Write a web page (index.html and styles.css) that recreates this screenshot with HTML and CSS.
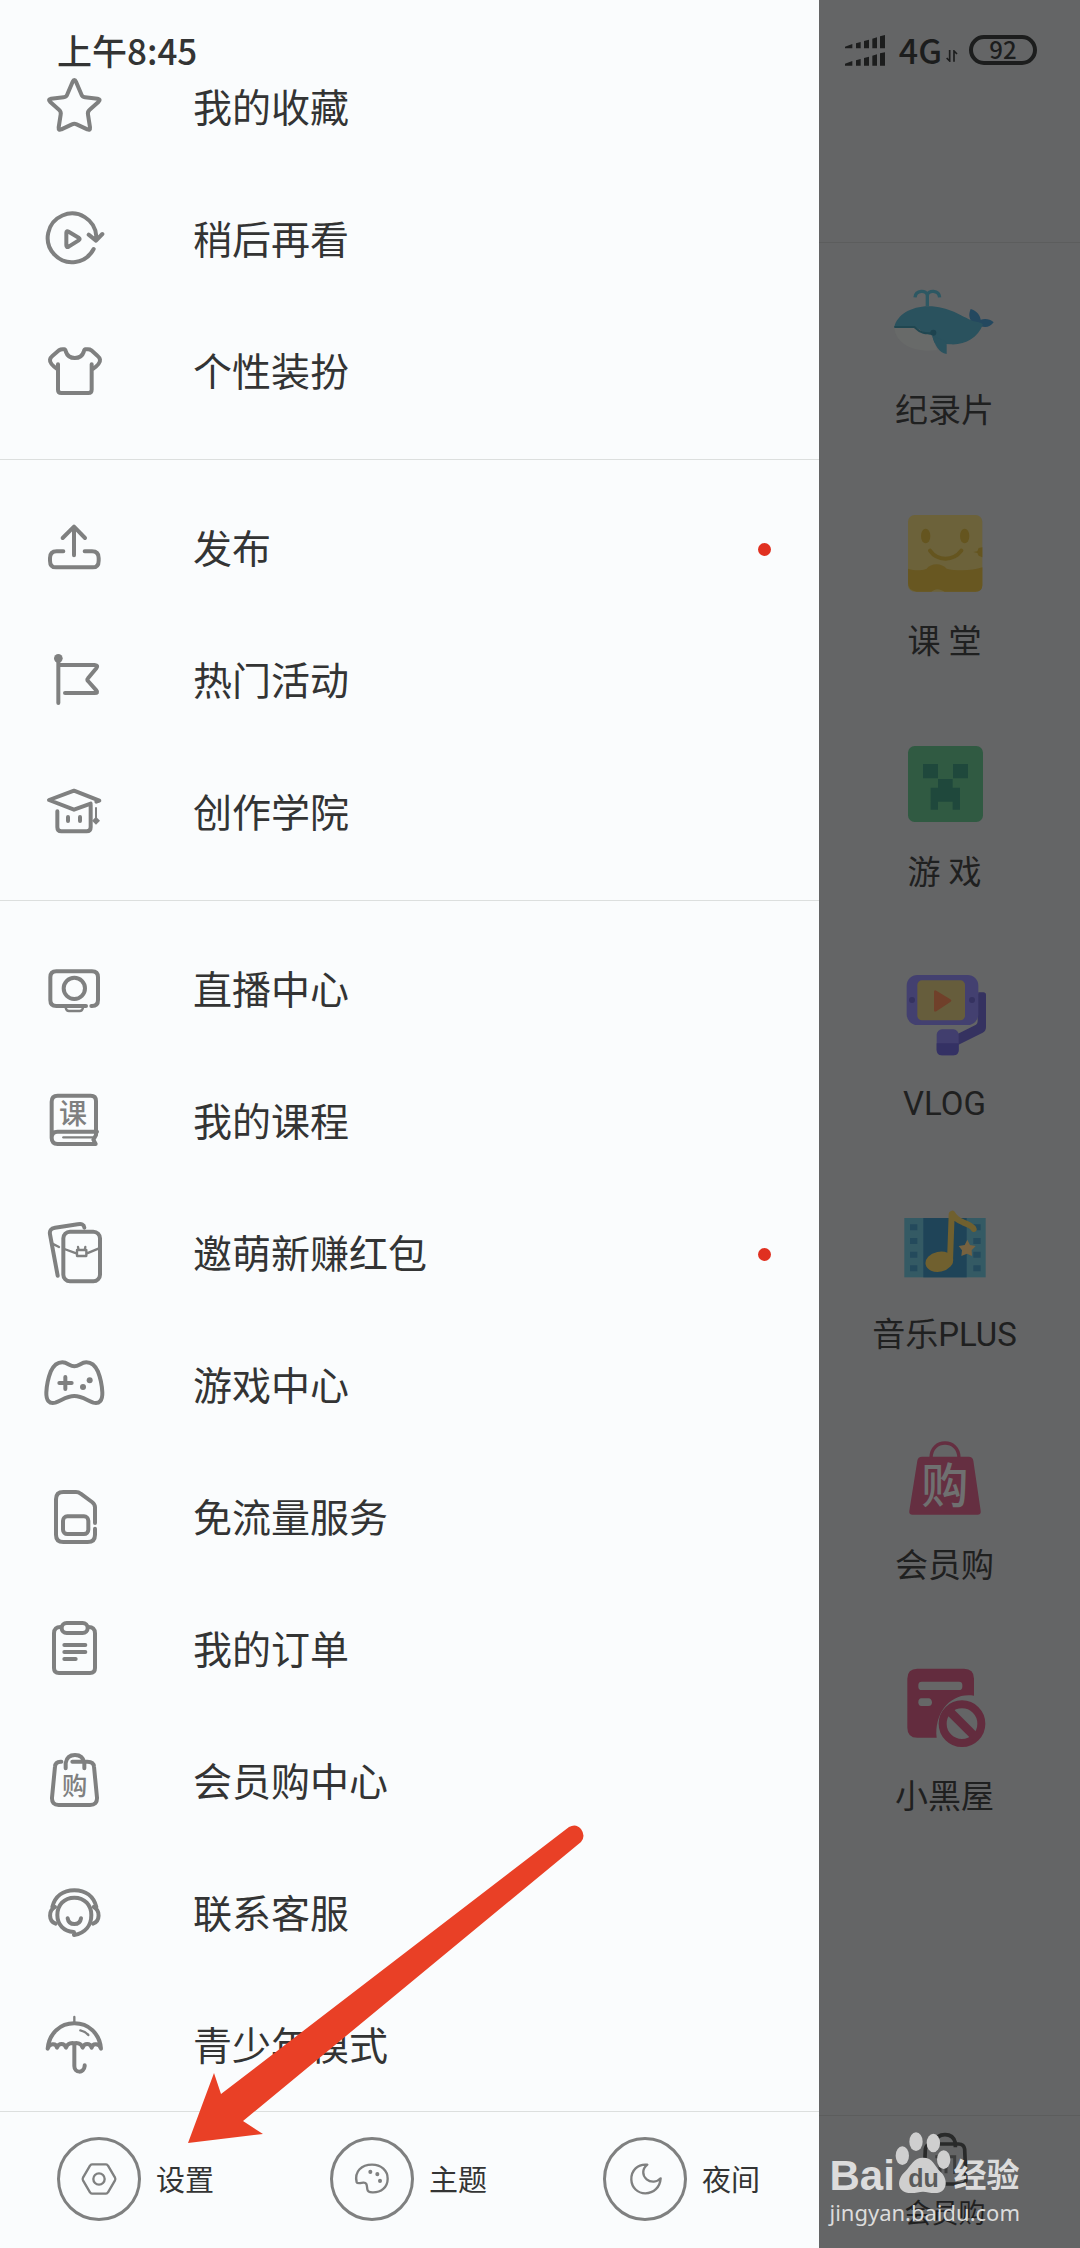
FILE: index.html
```html
<!DOCTYPE html>
<html lang="zh-CN">
<head>
<meta charset="UTF-8">
<meta name="viewport" content="width=device-width, initial-scale=1.0">
<title>侧边栏</title>
<link rel="stylesheet" href="styles.css">
</head>
<body>

<div class="screen">
    <header class="status-bar">
        <span class="time">上午8:45</span>
        <div class="status-right">
            <svg class="signal" viewBox="0 0 120 93">
                <path d="M0 35l22-8v13H0zM33 25l14-4v19H33zM57 18l15-4v26H57zM82 11l14-4v33H82zM105 4l15-4v40h-15zM0 86l22-8v14H0zM33 76l14-4v20H33zM57 69l15-4v27H57zM82 62l14-4v34H82zM105 55l15-3v40h-15z"/>
            </svg>
            <span class="network">4G</span>
            <svg class="data" viewBox="0 0 36 36">
                <path d="M11 0v33L2 24M24 35V3l9 9" fill="none" stroke="#1c1d1d" stroke-width="5"/>
            </svg>
            <span class="battery">92</span>
        </div>
    </header>

    <nav class="drawer">
        <div class="menu">
            <section class="group first">
                <a class="row" href="#">
                    <svg class="icon" viewBox="0 0 198 198">
                        <path d="M100 15q3 0 5 5l16 38q3 8 11 9l38 4q10 2 3 9l-27 24q-7 6-5 15l6 38q1 11-8 6l-32-15q-7-3-14 0l-32 15q-9 5-8-6l6-38q2-9-5-15L27 80q-7-7 3-9l38-4q8-1 11-9l16-38q2-5 5-5z"/>
                    </svg>
                    <span>我的收藏</span>
                </a>
                <a class="row" href="#">
                    <svg class="icon" viewBox="0 0 198 198">
                        <path d="M158 126a73 73 0 1 1 8-38v10M143 83l22 18 19-20M76 77v38q0 8 7 4l30-19q6-4 0-8L83 74q-7-4-7 3z"/>
                    </svg>
                    <span>稍后再看</span>
                </a>
                <a class="row" href="#">
                    <svg class="icon" viewBox="0 0 198 198">
                        <path d="M51 76v76q0 10 10 10h81q10 0 10-10V76M51 92Q25 74 27 62q1-6 7-11l20-17q5-3 11-3h5q3 0 5 8c8 24 45 24 53 0q2-8 5-8h8q6 0 10 3l19 17q6 5 7 11 2 12-24 30"/>
                    </svg>
                    <span>个性装扮</span>
                </a>
            </section>

            <section class="group">
                <a class="row" href="#">
                    <svg class="icon" viewBox="0 0 198 198">
                        <path d="M99 118V34M65 66l34-34 33 34M67 106H47q-20 0-20 20v8q0 20 18 20h110q18 0 18-20v-8q0-20-20-20h-22"/>
                    </svg>
                    <span>发布</span>
                    <i class="dot"></i>
                </a>
                <a class="row" href="#">
                    <svg class="icon" viewBox="0 0 198 198">
                        <circle class="solid" cx="52" cy="31" r="13"/>
                        <path d="M52 31v134M52 51h109q12 1 5 10l-25 30q-4 4 0 8l25 28q7 8-5 8H72"/>
                    </svg>
                    <span>热门活动</span>
                </a>
                <a class="row" href="#">
                    <svg class="icon" viewBox="0 0 198 198">
                        <path d="M166 65l9-3-76-30-75 28 75 29 50-18M49 94v48q0 12 12 12h76q12 0 12-12V74"/>
                        <path d="M81 111v12M117 111v12"/>
                        <path d="M165 84v40" stroke-width="6"/>
                        <path class="solid" d="M165 110l12 12-12 12-12-12z"/>
                    </svg>
                    <span>创作学院</span>
                </a>
            </section>

            <section class="group last">
                <a class="row" href="#">
                    <svg class="icon" viewBox="0 0 198 198">
                        <path d="M135 147H46q-18 0-18-18V61q0-18 18-18h107q18 0 18 18v68q0 18-18 18h-2"/>
                        <circle cx="100" cy="94" r="32"/>
                        <path class="thin" d="M74 152q2 10 10 10h32q8 0 10-10"/>
                    </svg>
                    <span>直播中心</span>
                </a>
                <a class="row" href="#">
                    <svg class="icon" viewBox="0 0 198 198">
                        <path d="M168 128H50q-18 0-18 18t18 19h114l-7-13 8-14V36q0-16-16-16H50q-18 0-18 18v110"/>
                        <path class="thin" d="M67 145h88"/>
                        <text x="96" y="104" font-size="84">课</text>
                    </svg>
                    <span>我的课程</span>
                </a>
                <a class="row" href="#">
                    <svg class="icon" viewBox="0 0 198 198">
                        <path d="M130 20c-1-10-8-12-20-10L42 20q-18 3-15 20l23 124"/>
                        <rect x="67" y="32" width="110" height="149" rx="20"/>
                        <path class="thin" d="M34 68l20 10M70 84l38 14M136 98l38-16M108 87h28v18h-28zM113 87l-2-9M131 87l2-9"/>
                    </svg>
                    <span>邀萌新赚红包</span>
                    <i class="dot"></i>
                </a>
                <a class="row" href="#">
                    <svg class="icon" viewBox="0 0 198 198">
                        <path d="M100 40c14 0 20-12 36-12 18 0 29 15 35 28 8 20 12 42 13 62 1 24-9 36-27 31-18-6-34-20-57-20s-39 14-57 20c-18 5-28-7-27-31 1-20 5-42 13-62 6-13 17-28 35-28 16 0 22 12 36 12z"/>
                        <path d="M73 72v36M55 90h37"/>
                        <circle class="solid" cx="146" cy="82" r="9"/>
                        <circle class="solid" cx="126" cy="102" r="9"/>
                    </svg>
                    <span>游戏中心</span>
                </a>
                <a class="row" href="#">
                    <svg class="icon" viewBox="0 0 198 198">
                        <path d="M162 131v18q0 22-22 22H67q-22 0-22-22V43q0-22 22-22h38q8 0 14 5l34 25q9 7 9 16v47"/>
                        <rect x="66" y="94" width="76" height="53" rx="13"/>
                    </svg>
                    <span>免流量服务</span>
                </a>
                <a class="row" href="#">
                    <svg class="icon" viewBox="0 0 198 198">
                        <path d="M60 30q-21-1-21 19v104q0 15 15 15h93q15 0 15-15V49q0-20-21-19"/>
                        <rect x="62" y="18" width="78" height="30" rx="15"/>
                        <path d="M70 84h63M70 105h63M70 126h34"/>
                    </svg>
                    <span>我的订单</span>
                </a>
                <a class="row" href="#">
                    <svg class="icon" viewBox="0 0 198 198">
                        <path d="M61 38q-18-1-19 15L33 146q-1 22 20 22h94q22 0 21-22l-9-93q-1-15-20-15H94M74 58V42q4-24 28-24t28 24v16"/>
                        <text x="101" y="138" font-size="76">购</text>
                    </svg>
                    <span>会员购中心</span>
                </a>
                <a class="row" href="#">
                    <svg class="icon" viewBox="0 0 198 198">
                        <path d="M98 153c-30-2-49-22-49-51s20-52 51-52 51 23 51 52c0 30-17 54-52 60v-8M80 112c2 12 10 17 20 17s18-5 20-17"/>
                        <path d="M34 78C42 46 66 28 100 28s58 18 66 50M42 78c-20 10-20 42 2 50M158 78c20 10 20 42-2 50"/>
                    </svg>
                    <span>联系客服</span>
                </a>
                <a class="row" href="#">
                    <svg class="icon" viewBox="0 0 198 198">
                        <path d="M20 107c4-46 38-76 80-76s76 30 80 76c-5-16-25-18-28-3-5-15-22-15-27 0-5-15-20-15-25-13-5-2-20-2-25 13-5-15-22-15-27 0-3-15-23-13-28 3zM100 96v63c0 22 29 23 31 0v-2"/>
                        <path class="thin" d="M100 12v18M118 52q15 3 24 14"/>
                    </svg>
                    <span>青少年模式</span>
                </a>
            </section>
        </div>

        <footer class="drawer-footer">
            <button class="tool">
                <span class="ring">
                    <svg viewBox="0 0 120 120">
                        <path d="M39 16h42q4 0 6 4l21 36q2 4 0 8L87 100q-2 4-6 4H39q-4 0-6-4L12 64q-2-4 0-8l21-36q2-4 6-4z"/>
                        <circle cx="60" cy="60" r="17"/>
                    </svg>
                </span>
                <span class="tool-name">设置</span>
            </button>
            <button class="tool">
                <span class="ring">
                    <svg viewBox="0 0 120 120">
                        <path d="M14 70C6 36 30 17 60 17c28 0 47 18 47 42 0 26-20 42-46 41-8 0-14-2-15-9-2-11 0-21-12-20-8 1-18 4-20-1z"/>
                        <path d="M55 38v1M76 45v1M84 65v1" stroke-width="12"/>
                    </svg>
                </span>
                <span class="tool-name">主题</span>
            </button>
            <button class="tool">
                <span class="ring">
                    <svg viewBox="0 0 120 120">
                        <path d="M67 17C38 14 18 35 19 62c1 24 19 41 42 41 25 0 44-18 46-45-10 12-30 13-42 3C51 49 51 30 67 17z"/>
                    </svg>
                </span>
                <span class="tool-name">夜间</span>
            </button>
        </footer>
    </nav>

    <main class="page">
        <div class="page-header"></div>
        <div class="categories">
            <a class="category" href="#">
                <svg viewBox="0 0 330 330">
                    <path d="M112 118V83M75 91c2-23 35-23 37-6 2-17 35-17 37 6" fill="none" stroke="#2d5863" stroke-width="10"/>
                    <path d="M246 166c-10-14-10-26-4-40 18 6 28 18 30 32 14-4 28-2 39 8-10 14-26 18-41 10z" fill="#24485f"/>
                    <path d="M13 180c8-36 50-62 102-62 62 0 98 30 134 44 16 4 26 4 30 10-16 42-54 62-96 60-60 0-120-22-170-52z" fill="#2a525e"/>
                    <path d="M13 180h60c20 8 34 24 54 24 2 20 14 34 14 46-70 8-126-20-128-70z" fill="#686a69"/>
                    <path d="M13 180h60c20 20 34 20 54 18" fill="none" stroke="#204751" stroke-width="6"/>
                    <circle cx="130" cy="197" r="9" fill="#1d434f"/>
                    <path d="M126 205c16 12 44 10 44 28v28c-24-4-34-24-44-56z" fill="#2a525e"/>
                </svg>
                <span>纪录片</span>
            </a>
            <a class="category" href="#">
                <svg viewBox="0 0 330 330">
                    <rect x="54" y="51" width="223" height="230" rx="20" fill="#6c623a"/>
                    <path d="M54 212c20 6 40 6 56 0 12-18 46-18 60 0 24 6 76 8 107-4v53q0 20-20 20H164c-16-10-28-10-40 0H80q-26-4-26-26z" fill="#685721"/>
                    <ellipse cx="107" cy="114" rx="14" ry="22" fill="#65551f"/>
                    <ellipse cx="224" cy="114" rx="14" ry="22" fill="#65551f"/>
                    <path d="M120 158c22 32 70 32 94 0" fill="none" stroke="#65551f" stroke-width="12" stroke-linecap="round"/>
                    <path d="M250 162l12-2 4-10 11-2v30l-11-5-4-8z" fill="#65551f"/>
                </svg>
                <span>课 堂</span>
            </a>
            <a class="category" href="#">
                <svg viewBox="0 0 330 330">
                    <rect x="54" y="51" width="225" height="228" rx="20" fill="#305a42"/>
                    <path d="M99 105h45v43H99zM189 105h45v43h-45zM144 150h44v26h22v66h-22v-24h-44v24h-22v-66h22z" fill="#1f483c"/>
                </svg>
                <span>游 戏</span>
            </a>
            <a class="category" href="#">
                <svg viewBox="0 0 330 330">
                    <path d="M265 97h15q8 0 8 8v96q0 12-10 17l-80 40-12-28 72-36q5-3 5-10v-32h-6z" fill="#353260"/>
                    <rect x="50" y="45" width="215" height="150" rx="32" fill="#434070"/>
                    <rect x="82" y="61" width="143" height="120" rx="14" fill="#665d3c"/>
                    <path d="M132 96q0-8 7-4l42 26q6 4 0 8l-42 28q-7 4-7-4z" fill="#70402a"/>
                    <circle cx="66" cy="120" r="9" fill="#353260"/>
                    <circle cx="246" cy="120" r="9" fill="#353260"/>
                    <rect x="140" y="208" width="66" height="78" rx="16" fill="#413e6e"/>
                    <path d="M140 250h66v20q0 16-16 16h-34q-16 0-16-16z" fill="#343164"/>
                </svg>
                <span>VLOG</span>
            </a>
            <a class="category" href="#">
                <svg viewBox="0 0 330 330">
                    <rect x="43" y="81" width="244" height="178" fill="#345a64"/>
                    <rect x="100" y="81" width="130" height="178" fill="#1f4458"/>
                    <path d="M60 100h22v18H60zM60 141h22v18H60zM60 182h22v18H60zM60 223h22v18H60zM250 100h22v18h-22zM250 141h22v18h-22zM250 182h22v18h-22zM250 223h22v18h-22z" fill="#244a5c"/>
                    <path d="M180 210L185 70M187 68q8 16 32 26 28 10 32 20" fill="none" stroke="#70602f" stroke-width="18" stroke-linecap="round"/>
                    <ellipse cx="148" cy="212" rx="42" ry="30" transform="rotate(-12 148 212)" fill="#70602f"/>
                    <path d="M232 146l8 16 17 3-12 13 1 17-15-7-17 7 2-17-10-13 18-3z" fill="#766240"/>
                </svg>
                <span>音乐PLUS</span>
            </a>
            <a class="category" href="#">
                <svg viewBox="0 0 330 330">
                    <path d="M123 108c0-60 84-60 84 0" fill="none" stroke="#652f41" stroke-width="10"/>
                    <path d="M96 104h140q12 0 14 12l22 150q2 12-10 12H68q-12 0-10-12l24-150q2-12 14-12z" fill="#652f41"/>
                    <text x="165" y="242" font-size="142" fill="#6f7070" text-anchor="middle" font-weight="500">购</text>
                </svg>
                <span>会员购</span>
            </a>
            <a class="category" href="#">
                <svg viewBox="0 0 330 330">
                    <path d="M82 47h140q30 0 30 30v51c-68-12-120 50-112 126H82q-30 0-30-30V77q0-30 30-30z" fill="#632c3e"/>
                    <rect x="85" y="86" width="132" height="25" rx="10" fill="#666767"/>
                    <path d="M94 136h22q8 0 10 12 0 11-10 11H94q-9 0-9-11t9-12z" fill="#666767"/>
                    <circle cx="216" cy="212" r="58" fill="none" stroke="#632c3e" stroke-width="24"/>
                    <path d="M176 172l80 80" stroke="#632c3e" stroke-width="26"/>
                </svg>
                <span>小黑屋</span>
            </a>
        </div>
        <div class="tab-bar">
            <a class="tab" href="#">
                <svg viewBox="0 0 150 168">
                    <path d="M42 36h-8q-16 0-18 16L12 142q0 14 14 14h98q14 0 14-14L134 52q-2-16-18-16H60M44 46V32Q50 8 75 8t31 24v14" fill="none" stroke="#292a2a" stroke-width="11"/>
                    <path d="M46 74h58v52M60 84v40M78 84v40" fill="none" stroke="#3c3d3d" stroke-width="9"/>
                </svg>
                <span>会员购</span>
            </a>
        </div>
    </main>

    <svg class="arrow" viewBox="0 0 396 318">
        <path d="M381 2q7-4 12 2 5 7 0 13L55 296l20 13L0 318 26 248l7 21z"/>
    </svg>

    <div class="watermark">
        <div class="brand">
            <span class="bai">Bai</span>
            <span class="paw">
                <svg viewBox="0 0 168 184">
                    <ellipse cx="22" cy="70" rx="20" ry="28"/>
                    <ellipse cx="63" cy="28" rx="20" ry="28"/>
                    <ellipse cx="115" cy="32" rx="20" ry="28"/>
                    <ellipse cx="146" cy="82" rx="20" ry="28"/>
                    <path d="M84 76c30 0 34 24 52 42 24 20 24 64-16 64-16 0-24-4-36-4s-20 4-36 4c-44 0-44-42-18-64 18-18 26-42 54-42z"/>
                </svg>
                <b>du</b>
            </span>
            <span class="exp">经验</span>
        </div>
        <div class="url">jingyan.baidu.com</div>
    </div>
</div>

</body>
</html>
```
FILE: styles.css
```css
* {
    box-sizing: border-box;
}
body {
    margin: 0;
    font-family: Roboto, 'Noto Sans CJK SC', sans-serif;
    background-color: #646566;
    color: #333434;
}
a {
    color: inherit;
    text-decoration: none;
}
.screen {
    position: relative;
    display: grid;
    grid-template-columns: 91fr 29fr;
    height: 100vh;
    overflow: hidden;
}

/* status bar floats over the drawer and the page */
.status-bar {
    position: absolute;
    top: 0;
    left: 0;
    right: 0;
    z-index: 2;
    display: flex;
    align-items: center;
    justify-content: space-between;
    height: 100px;
    padding: 0 43px 0 57px;
    font-family: 'Noto Sans CJK SC', sans-serif;
    font-weight: 500;
}
.time {
    padding-bottom: 2px;
    font-size: 35px;
}
.status-right {
    display: flex;
    align-items: center;
    color: #1c1d1d;
}
.signal {
    width: 40px;
    height: 31px;
    margin-right: 14px;
    fill: #1c1d1d;
}
.network {
    padding-bottom: 2px;
    font-size: 34px;
}
.data {
    width: 12px;
    height: 12px;
    margin: 12px 11px 0 4px;
}
.battery {
    width: 68px;
    height: 30px;
    border: 4px solid #1c1d1d;
    border-radius: 15px;
    font-size: 24px;
    line-height: 20px;
    text-align: center;
}

.drawer {
    display: flex;
    flex-direction: column;
    min-height: 0;
    background-color: #fafcfd;
}
.menu {
    flex: 1;
    min-height: 0;
    overflow: hidden;
}
.group {
    padding: 23px 0 21px;
    border-bottom: 1px solid #dcdfde;
}
.group.first {
    padding-top: 42px;
}
.group.last {
    padding-bottom: 0;
    border-bottom: none;
}
.row {
    display: flex;
    align-items: center;
    height: 132px;
    padding: 0 48px 0 41px;
    font-size: 39px;
}
.row span {
    padding-bottom: 6px;
}
.icon {
    width: 66px;
    height: 66px;
    margin-right: 86px;
    fill: none;
    stroke: #7f8080;
    stroke-width: 12;
    stroke-linecap: round;
    stroke-linejoin: round;
}
.icon .solid {
    fill: #7f8080;
    stroke: none;
}
.icon .thin {
    stroke-width: 7;
}
.icon text {
    fill: #7f8080;
    stroke: none;
    font-weight: 500;
    text-anchor: middle;
}
.dot {
    width: 13px;
    height: 13px;
    margin-left: auto;
    border-radius: 50%;
    background-color: #e03020;
}

.drawer-footer {
    display: grid;
    grid-template-columns: repeat(3, 1fr);
    height: 137px;
    padding-bottom: 2px;
    border-top: 1px solid #dcdfde;
}
.tool {
    display: flex;
    align-items: center;
    gap: 15px;
    padding: 0 0 0 57px;
    border: none;
    background: none;
    color: inherit;
    font-family: inherit;
    font-size: 29px;
    cursor: pointer;
}
.tool-name {
    padding-bottom: 2px;
}
.ring {
    display: flex;
    align-items: center;
    justify-content: center;
    width: 84px;
    height: 84px;
    border: 3px solid #7f8080;
    border-radius: 50%;
}
.ring svg {
    width: 40px;
    height: 40px;
    fill: none;
    stroke: #7f8080;
    stroke-width: 7;
    stroke-linecap: round;
    stroke-linejoin: round;
}

/* page behind the drawer, already dimmed */
.page {
    display: flex;
    flex-direction: column;
    color: #1f2020;
}
.page-header {
    height: 243px;
    border-bottom: 1px solid #5c5d5d;
}
.categories {
    flex: 1;
    padding-right: 10px;
}
.category {
    display: flex;
    flex-direction: column;
    align-items: center;
    gap: 10px;
    height: 231px;
    padding-top: 24px;
    font-size: 33px;
    line-height: 48px;
}
.category svg {
    width: 110px;
    height: 110px;
}
.tab-bar {
    height: 133px;
    padding: 16px 9px 0 0;
    border-top: 1px solid #5c5d5d;
}
.tab {
    display: flex;
    flex-direction: column;
    align-items: center;
    gap: 6px;
    font-size: 27px;
    line-height: 40px;
}
.tab svg {
    width: 50px;
    height: 56px;
}

.arrow {
    position: absolute;
    left: 188px;
    bottom: 105px;
    width: 396px;
    height: 318px;
    fill: #e94026;
}

.watermark {
    position: absolute;
    right: 60px;
    bottom: 18px;
    color: #dcdcdc;
}
.brand {
    display: flex;
    align-items: flex-end;
    height: 62px;
}
.bai {
    width: 66px;
    font: bold 42px/36px 'Liberation Sans', sans-serif;
}
.paw {
    position: relative;
    width: 56px;
    height: 62px;
}
.paw svg {
    width: 56px;
    height: 62px;
    fill: #cfcfcf;
}
.paw b {
    position: absolute;
    right: 0;
    bottom: 0;
    left: 0;
    color: #5a5b5b;
    font: bold 25px/32px 'Liberation Sans', sans-serif;
    text-align: center;
}
.exp {
    margin-left: 2px;
    font-size: 33px;
    font-weight: 700;
    line-height: 36px;
}
.url {
    font: 22px/36px 'Noto Sans', sans-serif;
}
```
